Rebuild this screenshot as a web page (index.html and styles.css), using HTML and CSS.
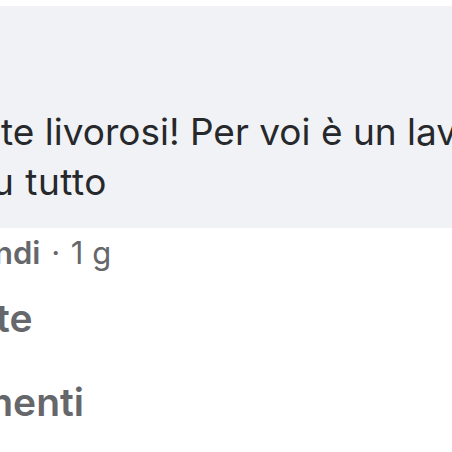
FILE: index.html
```html
<!DOCTYPE html>
<html lang="it">
<head>
  <meta charset="UTF-8" />
  <meta name="viewport" content="width=device-width, initial-scale=1.0"/>
  <title>Commento</title>
  <link rel="stylesheet" href="styles.css">
</head>
<body>
  <div class="comment">
    <div class="bubble">
      <p class="comment-text">te livorosi! Per voi è un lavoro</p>
      <p class="comment-text second">u tutto</p>
    </div>

    <div class="meta">
      <span class="action">ndi</span>
      <span class="dot">·</span>
      <span class="time">1 g</span>
    </div>

    <div class="more-links">
      <span class="more">te</span>
      <span class="more last">menti</span>
    </div>
  </div>
</body>
</html>
```

FILE: styles.css
```css
:root {
  --bubble-grey: #f0f2f5;
  --text-dark: #26282b;
  --text-muted: #65676b;
}

body {
  margin: 0;
  width: 452px;
  height: 452px;
  overflow: hidden;
  background: #fff;
  font-family: Inter, 'Liberation Sans', Arial, sans-serif;
}

.comment {
  display: flex;
  flex-direction: column;
}

.bubble {
  margin-top: 6px;
  height: 222px;
  box-sizing: border-box;
  padding-top: 101px;
  background: var(--bubble-grey);
  overflow: hidden;
}

.comment-text {
  margin: 0;
  padding-left: 1px;
  font-size: 37px;
  line-height: 50px;
  color: var(--text-dark);
  white-space: nowrap;
}

.comment-text.second {
  text-indent: -9px;
  letter-spacing: 0.5px;
}

.meta {
  margin-top: 6px;
  font-size: 31px;
  line-height: 38px;
  color: var(--text-muted);
  white-space: nowrap;
  text-indent: -6px;
}

.meta .action {
  font-weight: 600;
}

.meta .dot {
  margin: 0 2px;
}

.more-links {
  display: flex;
  flex-direction: column;
  gap: 36px;
  margin-top: 22px;
}

.more {
  font-size: 39px;
  line-height: 48px;
  font-weight: 600;
  color: var(--text-muted);
  white-space: nowrap;
  text-indent: -4px;
}

.more.last {
  text-indent: -22px;
}
```
